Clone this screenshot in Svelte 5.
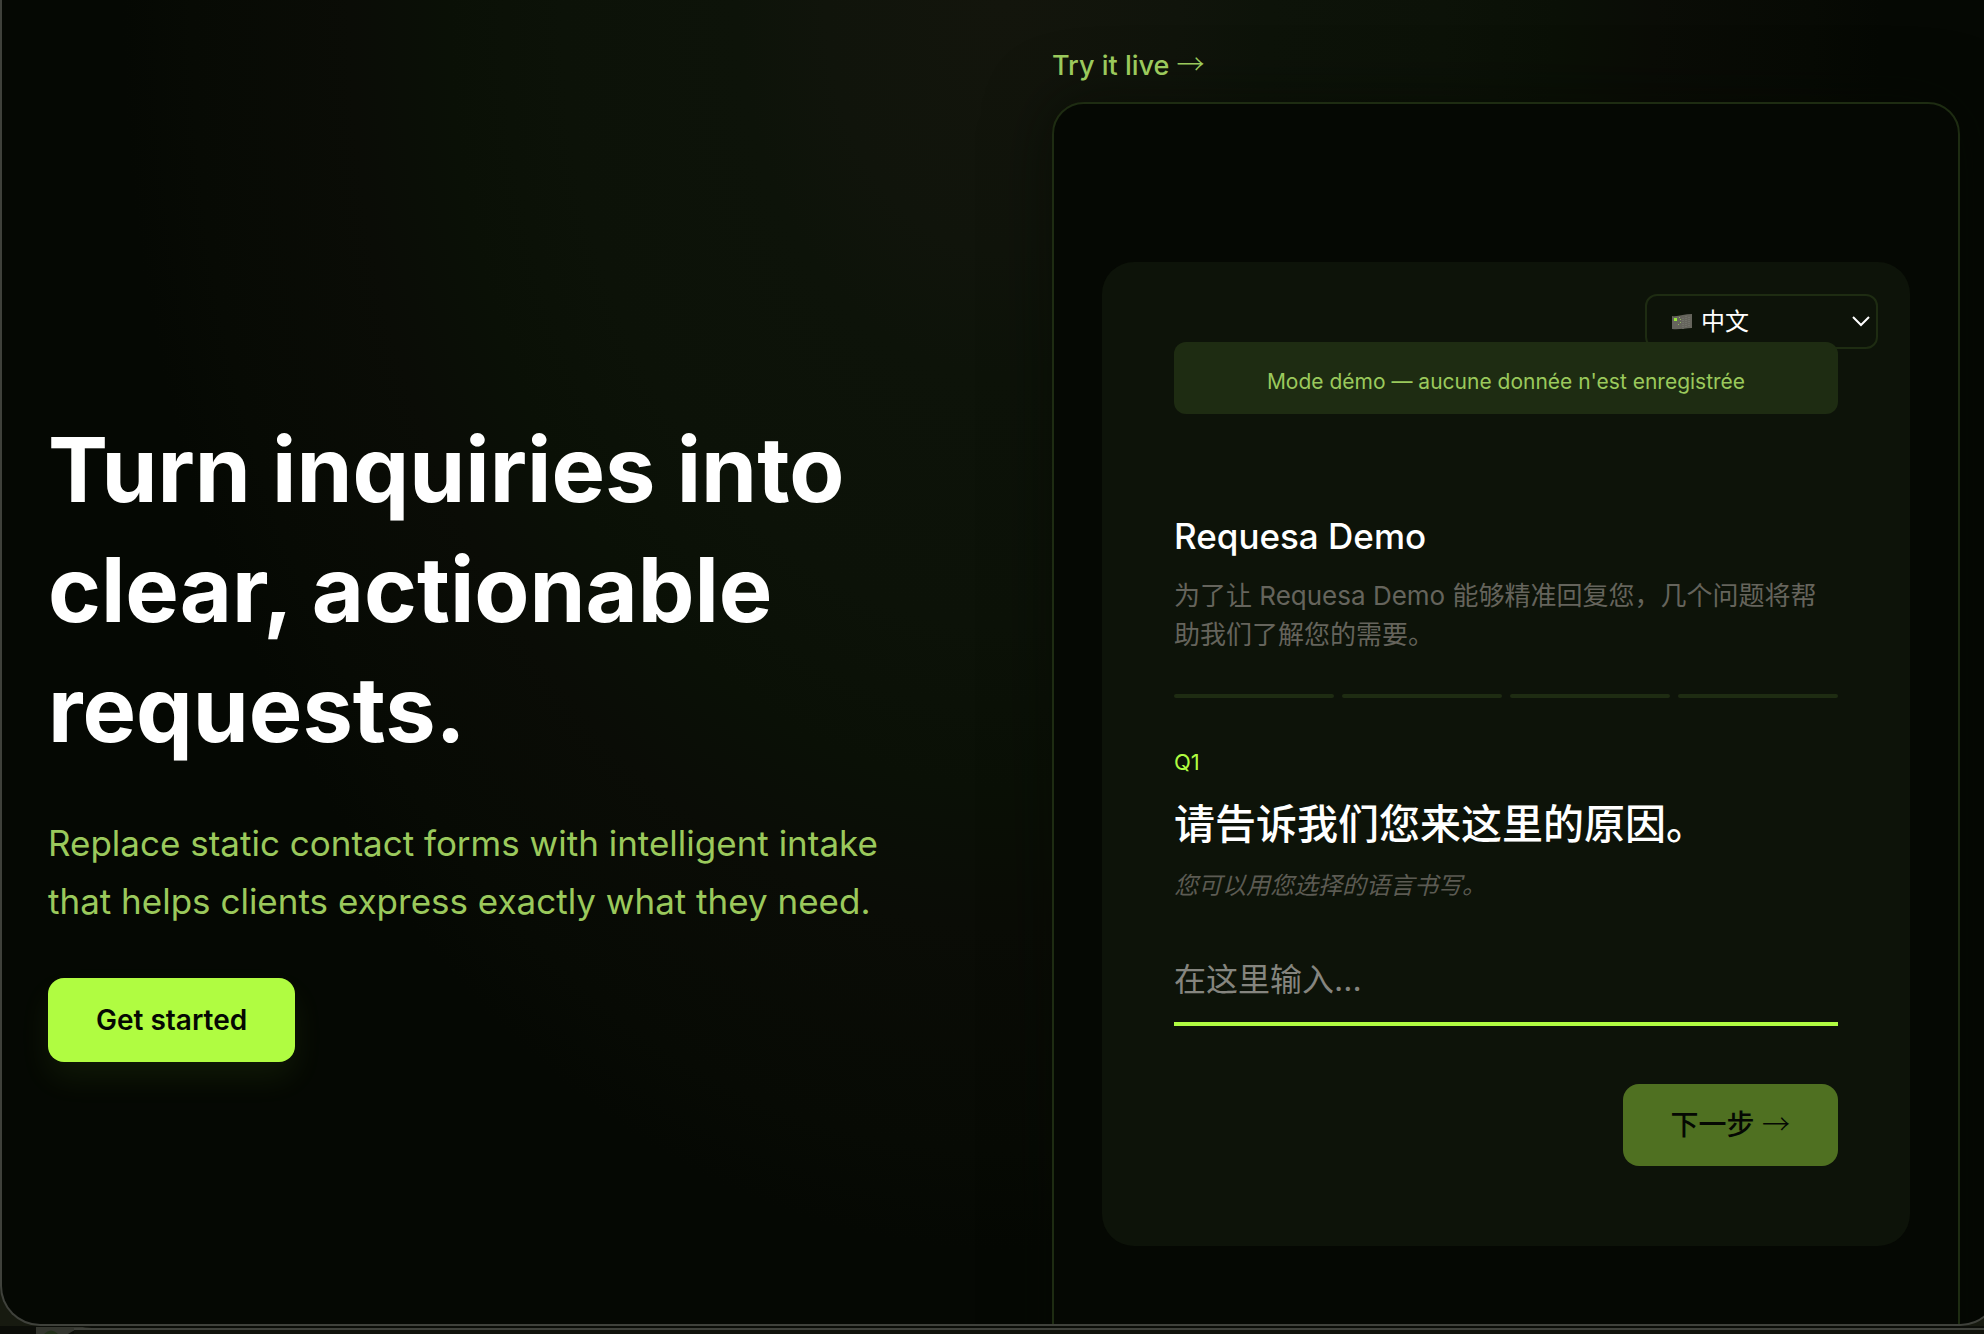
<script>
    //* copy for the landing column and the embedded demo form
    const text = {
        title: 'Turn inquiries into clear, actionable requests.',
        lead: 'Replace static contact forms with intelligent intake that helps clients express exactly what they need.',
        start: 'Get started',
        live: 'Try it live',
        notice: "Mode démo — aucune donnée n'est enregistrée",
        company: 'Requesa Demo',
        intro: '为了让 Requesa Demo 能够精准回复您，几个问题将帮助我们了解您的需要。',
        question: '请告诉我们您来这里的原因。',
        hint: '您可以用您选择的语言书写。',
        placeholder: '在这里输入...',
        next: '下一步',
    };

    const steps = [1, 2, 3, 4];

    //* local reactive variables
    let language = 'zh';
    let answer = '';
</script>

<div class="desktop">
    <main class="window">
        <section class="pitch">
            <h1>{text.title}</h1>
            <p>{text.lead}</p>
            <button type="button" class="start">{text.start}</button>
        </section>

        <section class="live">
            <a href="#demo">{text.live} <span class="arrow">→</span></a>

            <div class="frame" id="demo">
                <form class="card" on:submit|preventDefault>
                    <div class="language">
                        <svg class="flag" viewBox="0 0 22 16" aria-hidden="true">
                            <path d="M1 2C7 3 13 0 21 0V14C14 14 8 16 1 15Z" fill="#65645c" />
                            <path d="M3 4h3v3H3z" fill="#9be83a" />
                            <path d="M8 3h1v1H8zM9 5h1v1H9zM9 8h1v1H9zM7 10h1v1H7z" fill="#91b463" />
                            <path d="M12 4v11M15 2v12M18 3v10" stroke="#7d7c75" stroke-dasharray="1 1" />
                        </svg>
                        <select aria-label="语言" bind:value={language}>
                            <option value="zh">中文</option>
                        </select>
                        <svg class="chevron" viewBox="0 0 18 11" aria-hidden="true">
                            <path d="M1 1l8 8 8-8" fill="none" stroke="#fff" stroke-width="2" />
                        </svg>
                    </div>

                    <div class="notice">{text.notice}</div>

                    <h2>{text.company}</h2>
                    <p class="intro">{text.intro}</p>

                    <div class="steps">
                        {#each steps as step (step)}
                            <span></span>
                        {/each}
                    </div>

                    <div class="number">Q1</div>
                    <label for="answer">{text.question}</label>
                    <p class="hint">{text.hint}</p>
                    <input id="answer" type="text" placeholder={text.placeholder} bind:value={answer} />

                    <button type="submit" class="next">{text.next} <span class="arrow">→</span></button>
                </form>
            </div>
        </section>
    </main>

    <div class="behind">
        <svg viewBox="0 0 56 7" aria-hidden="true">
            <path d="M0 0H56Q42 0 32 7H0Z" fill="#34362f" />
            <path d="M8 7Q15 0 22 7Z" fill="#22301a" />
        </svg>
        <div class="edge"></div>
    </div>
</div>

<style>
    :global(body) {
        background-color: #171a10;
    }

    .desktop {
        display: flex;
        flex-direction: column;
        height: 100vh;
        overflow: hidden;
        color: #fff;
        font-family: Inter, "Noto Sans CJK SC", sans-serif;
    }

    h1, h2, p {
        margin: 0;
    }

    button {
        border: 0;
        border-radius: 16px;
        color: #050803;
        font-family: inherit;
        font-size: 28px;
        font-weight: 500;
        line-height: 36px;
        cursor: pointer;
    }

    .window {
        flex: 1;
        min-height: 0;
        display: grid;
        grid-template-columns: 1fr 1fr;
        gap: 96px;
        align-items: center;
        align-content: start;
        box-sizing: border-box;
        margin-right: -16px;
        padding: 48px 38px 0 46px;
        overflow: hidden;
        border: 2px solid #3f413b;
        border-top: 0;
        border-radius: 0 0 40px 40px;
        background: radial-gradient(ellipse 880px 1250px at 1000px 0, #13150c 0%, #10140b 20%, #0d1309 30%, #0c1208 50%, #0a1006 63%, #0a0c06 74%, #070a04 92%, #050803 100%) #050803;
    }

    .pitch {
        padding-top: 18px;
    }

    .pitch h1 {
        font-size: 90px;
        font-weight: 700;
        line-height: 120px;
    }

    .pitch p {
        max-width: 880px;
        margin: 44px 0 48px;
        color: #9bc95c;
        font-size: 35px;
        line-height: 58px;
    }

    .start {
        padding: 24px 48px;
        background-color: #b0fc41;
        box-shadow: 0 16px 32px rgba(176, 252, 65, 0.07);
        font-weight: 600;
    }

    .live a {
        display: block;
        margin-bottom: 18px;
        color: #9bc95c;
        font-size: 27px;
        font-weight: 500;
        line-height: 36px;
        text-decoration: none;
    }

    .arrow {
        font-family: "Noto Sans CJK SC", sans-serif;
        font-size: 28px;
        font-weight: 300;
        line-height: 1;
    }

    .frame {
        padding: 158px 48px;
        border: 2px solid #1e2c12;
        border-radius: 32px;
        background-color: #050803;
        box-shadow: 0 0 64px rgba(5, 8, 3, 0.6);
    }

    .card {
        position: relative;
        display: flex;
        flex-direction: column;
        padding: 80px 72px;
        border-radius: 32px;
        background-color: #0d1309;
    }

    .language {
        position: absolute;
        top: 32px;
        right: 32px;
        display: flex;
        align-items: center;
    }

    .language select {
        width: 233px;
        height: 55px;
        padding: 0 48px 0 54px;
        appearance: none;
        border: 2px solid #1e2c12;
        border-radius: 12px;
        background-color: transparent;
        color: #fff;
        font-family: inherit;
        font-size: 24px;
    }

    .flag {
        position: absolute;
        left: 26px;
        width: 22px;
        height: 16px;
    }

    .chevron {
        position: absolute;
        right: 8px;
        width: 18px;
        height: 11px;
        pointer-events: none;
    }

    .notice {
        position: relative;
        padding: 26px 24px 18px;
        border-radius: 12px;
        background-color: #1e2c12;
        color: #9bc95c;
        font-size: 21px;
        line-height: 28px;
        text-align: center;
    }

    h2 {
        margin-top: 100px;
        font-size: 35px;
        font-weight: 500;
        line-height: 44px;
    }

    .intro {
        margin-top: 18px;
        color: #65645c;
        font-size: 26px;
        line-height: 39px;
    }

    .steps {
        display: flex;
        gap: 8px;
        margin-top: 40px;
    }

    .steps span {
        flex: 1;
        height: 4px;
        border-radius: 2px;
        background-color: #1e2c12;
    }

    .number {
        margin-top: 50px;
        color: #b0fc41;
        font-size: 22px;
        line-height: 28px;
    }

    label {
        margin-top: 22px;
        font-size: 41px;
        font-weight: 500;
        line-height: 52px;
    }

    .hint {
        margin-top: 18px;
        color: #5c5b53;
        font-size: 24px;
        font-style: italic;
        line-height: 36px;
    }

    input {
        margin-top: 40px;
        padding: 16px 0 22px;
        border: 0;
        border-bottom: 4px solid #b0fc41;
        outline: 0;
        background-color: transparent;
        color: #fff;
        font-family: inherit;
        font-size: 32px;
        line-height: 40px;
    }

    input::placeholder {
        color: #85857f;
        opacity: 1;
    }

    .next {
        align-self: flex-end;
        margin-top: 58px;
        padding: 23px 48px;
        background-color: #4f7021;
    }

    .behind {
        display: flex;
        height: 8px;
        padding: 1px 0 0 36px;
        box-sizing: border-box;
        background-color: #0b0d08;
    }

    .behind svg {
        width: 56px;
        height: 7px;
    }

    .edge {
        flex: 1;
        margin: 1px 0 0 -18px;
        border-top: 2px solid #3f413b;
        background-color: #11130c;
    }
</style>
